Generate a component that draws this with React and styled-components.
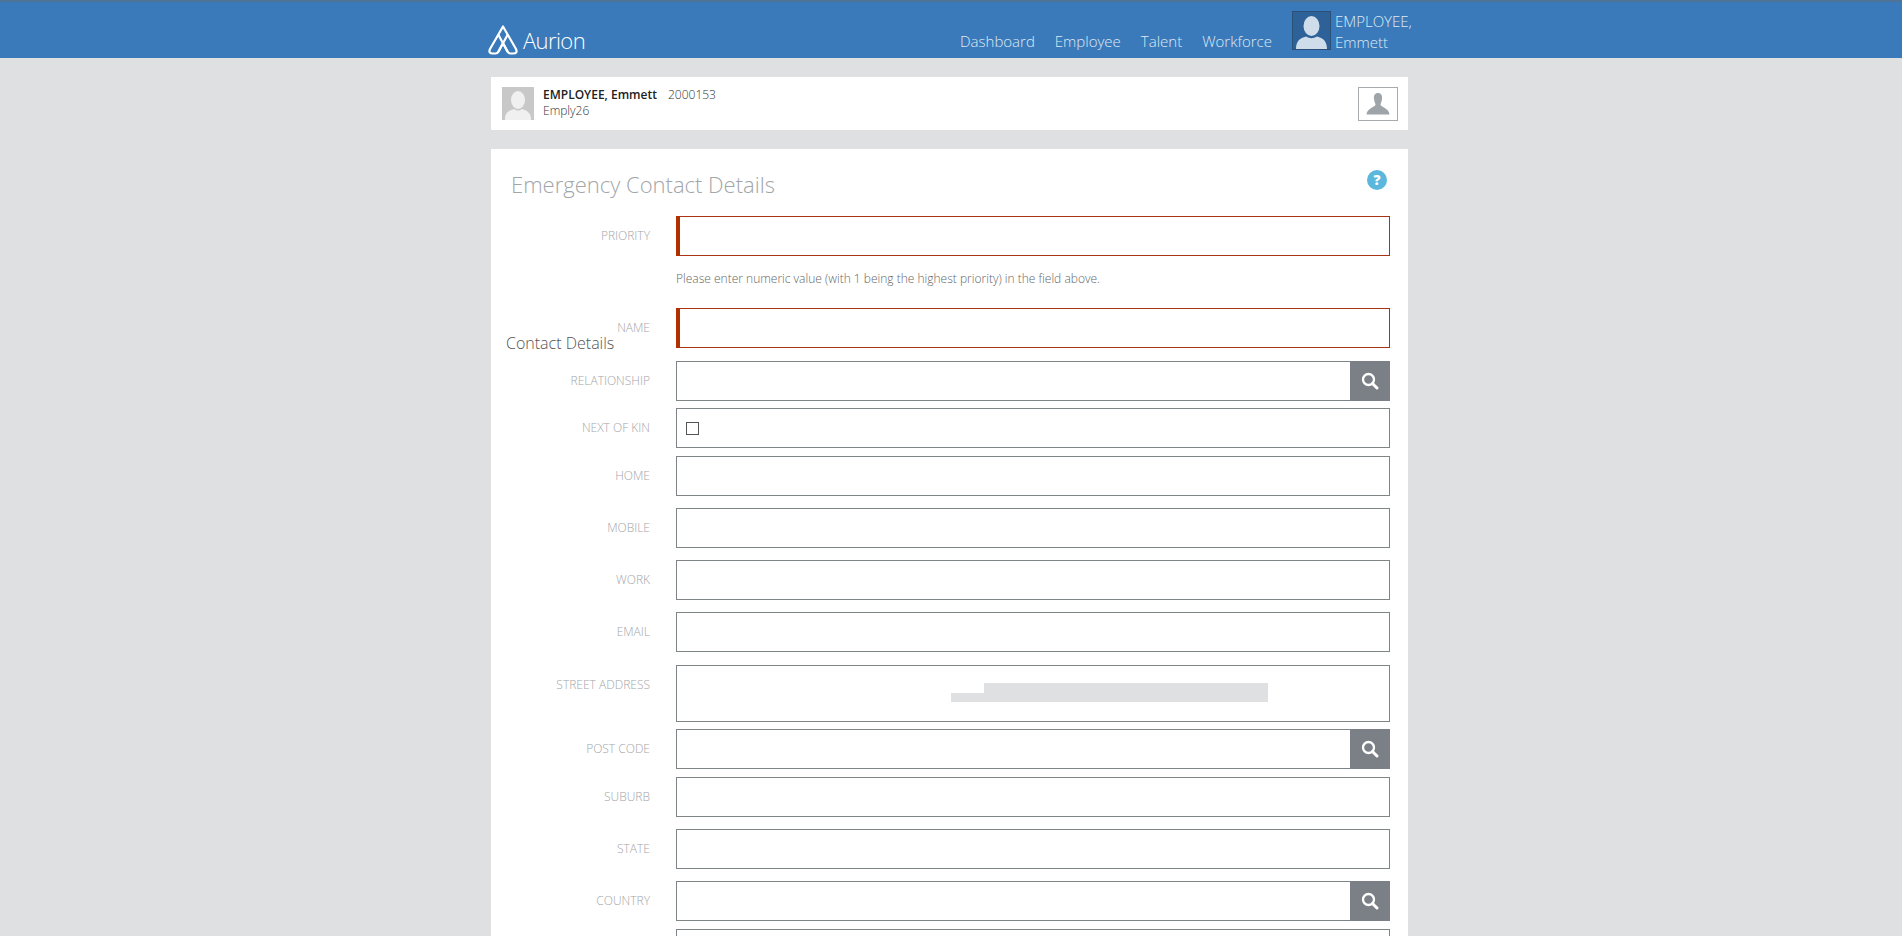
import styled, { createGlobalStyle } from 'styled-components';

const GlobalStyle = createGlobalStyle`
  html, body {
    margin: 0;
    height: 936px;
    overflow: hidden;
    background-color: #dfe0e2;
    font-family: "Open Sans", "Liberation Sans", sans-serif;
  }
`;

const Header = styled.header`
  box-sizing: border-box;
  height: 58px;
  background-color: #3a7aba;
  border-top: 2px solid #4f7396;
  display: flex;
  padding-left: 488px;
`;

const Logo = styled.div`
  display: flex;
  align-items: flex-end;
  width: 472px;
  height: 42px;
  margin-top: 11px;
`;

const LogoText = styled.span`
  color: #fff;
  font-size: 22px;
  font-weight: 300;
  line-height: 30px;
  margin-left: 5px;
  letter-spacing: -0.6px;
`;

const Nav = styled.nav`
  display: flex;
  gap: 20px;
  padding-top: 28px;
`;

const NavLink = styled.a`
  color: #dfe9f4;
  font-size: 15px;
  font-weight: 300;
  line-height: 22px;
`;

const UserBox = styled.div`
  display: flex;
  margin-left: 20px;
  padding-top: 9px;
`;

const HeaderAvatar = styled.div`
  box-sizing: border-box;
  width: 39px;
  height: 39px;
  background-color: #2d6198;
  border: 1px solid #2a4f78;
`;

const UserName = styled.div`
  color: #dfe9f4;
  font-size: 15px;
  font-weight: 300;
  line-height: 21px;
  margin-left: 4px;
  width: 84px;
`;

const Main = styled.main`
  width: 917px;
  margin-left: 491px;
`;

const PersonBar = styled.section`
  box-sizing: border-box;
  height: 53px;
  margin-top: 19px;
  background-color: #fff;
  display: flex;
  padding: 10px 10px 0 11px;
`;

const PersonPhoto = styled.div`
  width: 32px;
  height: 33px;
  background-color: #c8c8c8;
  overflow: hidden;
`;

const PersonText = styled.div`
  margin-left: 9px;
  flex: 1;
  color: #333;
  font-size: 12px;
  line-height: 16px;
`;

const PersonName = styled.b`
  font-weight: 600;
  color: #222;
  margin-right: 11px;
`;

const PersonNumber = styled.span`
  font-weight: 300;
`;

const PersonCode = styled.div`
  font-weight: 300;
`;

const PhotoButton = styled.div`
  box-sizing: border-box;
  width: 40px;
  height: 34px;
  border: 1px solid #a8abad;
  display: flex;
  align-items: center;
  justify-content: center;
`;

const FormCard = styled.section`
  position: relative;
  margin-top: 19px;
  background-color: #fff;
  padding-right: 18px;
  height: 900px;
`;

const TitleRow = styled.div`
  box-sizing: border-box;
  height: 67px;
  display: flex;
  justify-content: space-between;
  padding: 19px 3px 0 20px;
`;

const Title = styled.h1`
  margin: 0;
  color: #a1a6a9;
  font-size: 22px;
  font-weight: 300;
  line-height: 33px;
`;

const Help = styled.div`
  width: 20px;
  height: 20px;
  margin-top: 2px;
  border-radius: 50%;
  background-color: #5bb8dc;
  color: #fff;
  font-size: 14px;
  font-weight: 800;
  line-height: 20px;
  text-align: center;
`;

const SectionName = styled.h2`
  position: absolute;
  left: 15px;
  top: 181px;
  margin: 0;
  color: #555;
  font-size: 16px;
  font-weight: 300;
  line-height: 26px;
`;

const Row = styled.div`
  display: grid;
  grid-template-columns: 159px 714px;
  column-gap: 26px;
  align-items: start;
  margin-top: ${props => props.$gap || 0}px;
`;

const Label = styled.label`
  color: #a3a6a8;
  font-size: 12px;
  font-weight: 300;
  line-height: 40px;
  text-align: right;
`;

const Field = styled.div`
  box-sizing: border-box;
  position: relative;
  display: flex;
  align-items: center;
  height: ${props => props.$height || 40}px;
  border: 1px solid #7f8487;
  background-color: #fff;
`;

const RequiredField = styled(Field)`
  border-color: #a93412;
  border-left: 4px solid #b03000;
`;

const SearchButton = styled.div`
  position: absolute;
  top: -1px;
  right: -1px;
  bottom: -1px;
  width: 40px;
  background-color: #7a8085;
  display: flex;
  align-items: center;
  justify-content: center;
`;

const Checkbox = styled.span`
  box-sizing: border-box;
  width: 13px;
  height: 13px;
  margin-left: 9px;
  border: 1px solid #555;
`;

const Hint = styled.p`
  box-sizing: border-box;
  height: 52px;
  margin: 0 0 0 185px;
  padding-top: 14px;
  color: #666;
  font-size: 12px;
  font-weight: 300;
  line-height: 18px;
`;

const MaskTop = styled.div`
  position: absolute;
  left: 307px;
  top: 17px;
  width: 284px;
  height: 19px;
  background-color: #dfe0e2;
`;

const MaskLeft = styled.div`
  position: absolute;
  left: 274px;
  top: 27px;
  width: 33px;
  height: 9px;
  background-color: #dfe0e2;
`;

const AurionMark = () => (
  <svg width="30" height="30" viewBox="0 0 30 30" fill="none" stroke="#fff" strokeWidth="2.2" strokeLinejoin="round" strokeLinecap="round">
    <path d="M15 1.5 L2 24 Q0 28.5 5 28.5 L7.5 28.5 Q9.5 28.5 10.5 26.5 L15 18 L19.5 26.5 Q20.5 28.5 22.5 28.5 L25 28.5 Q30 28.5 28 24 Z" />
    <path d="M10.5 10 L19.5 26.5 M19.5 10 L10.5 26.5" />
  </svg>
);

const HeaderPerson = () => (
  <svg width="37" height="37" viewBox="0 0 37 37" fill="#cfdcea">
    <ellipse cx="18.5" cy="14" rx="8" ry="10" />
    <path d="M3 37 C3 29 7 26 13 24.5 Q18.5 28 24 24.5 C30 26 34 29 34 37 Z" />
  </svg>
);

const BarPerson = () => (
  <svg width="32" height="33" viewBox="0 0 32 33" fill="#f0f0f0">
    <ellipse cx="16" cy="13" rx="7" ry="9" />
    <path d="M3 33 C3 26 6 24 12 22 Q16 25 20 22 C26 24 29 26 29 33 Z" />
  </svg>
);

const PhotoIcon = () => (
  <svg width="24" height="22" viewBox="0 0 24 22" fill="#9ea4a8">
    <path d="M12 0 C15 0 16.5 2.500 16 6 C15.700 8.500 14.800 10 14.500 11.500 C14.500 14 23 15 23.500 21.500 L0.500 21.500 C1 15 9.500 14 9.500 11.500 C9.200 10 8.300 8.500 8 6 C7.500 2.500 9 0 12 0 Z" />
  </svg>
);

const SearchIcon = () => (
  <svg width="18" height="18" viewBox="0 0 18 18" fill="none" stroke="#fff">
    <circle cx="7.500" cy="7.500" r="5.500" strokeWidth="2.300" />
    <path d="M11.500 11.500 L16 16" strokeWidth="3" strokeLinecap="round" />
  </svg>
);

function App() {
  const lookup = (
    <SearchButton>
      <SearchIcon />
    </SearchButton>
  );

  return (
    <>
      <GlobalStyle />
      <Header>
        <Logo>
          <AurionMark />
          <LogoText>Aurion</LogoText>
        </Logo>
        <Nav>
          <NavLink>Dashboard</NavLink>
          <NavLink>Employee</NavLink>
          <NavLink>Talent</NavLink>
          <NavLink>Workforce</NavLink>
        </Nav>
        <UserBox>
          <HeaderAvatar>
            <HeaderPerson />
          </HeaderAvatar>
          <UserName>EMPLOYEE, Emmett</UserName>
        </UserBox>
      </Header>
      <Main>
        <PersonBar>
          <PersonPhoto>
            <BarPerson />
          </PersonPhoto>
          <PersonText>
            <PersonName>EMPLOYEE, Emmett</PersonName>
            <PersonNumber>2000153</PersonNumber>
            <PersonCode>Emply26</PersonCode>
          </PersonText>
          <PhotoButton>
            <PhotoIcon />
          </PhotoButton>
        </PersonBar>
        <FormCard>
          <TitleRow>
            <Title>Emergency Contact Details</Title>
            <Help>?</Help>
          </TitleRow>
          <SectionName>Contact Details</SectionName>
          <Row>
            <Label>PRIORITY</Label>
            <RequiredField />
          </Row>
          <Hint>Please enter numeric value (with 1 being the highest priority) in the field above.</Hint>
          <Row>
            <Label>NAME</Label>
            <RequiredField />
          </Row>
          <Row $gap={13}>
            <Label>RELATIONSHIP</Label>
            <Field $height={40}>{lookup}</Field>
          </Row>
          <Row $gap={7}>
            <Label>NEXT OF KIN</Label>
            <Field>
              <Checkbox />
            </Field>
          </Row>
          <Row $gap={8}>
            <Label>HOME</Label>
            <Field />
          </Row>
          <Row $gap={12}>
            <Label>MOBILE</Label>
            <Field />
          </Row>
          <Row $gap={12}>
            <Label>WORK</Label>
            <Field />
          </Row>
          <Row $gap={12}>
            <Label>EMAIL</Label>
            <Field />
          </Row>
          <Row $gap={13}>
            <Label>STREET ADDRESS</Label>
            <Field $height={57}>
              <MaskTop />
              <MaskLeft />
            </Field>
          </Row>
          <Row $gap={7}>
            <Label>POST CODE</Label>
            <Field>{lookup}</Field>
          </Row>
          <Row $gap={8}>
            <Label>SUBURB</Label>
            <Field />
          </Row>
          <Row $gap={12}>
            <Label>STATE</Label>
            <Field />
          </Row>
          <Row $gap={12}>
            <Label>COUNTRY</Label>
            <Field>{lookup}</Field>
          </Row>
          <Row $gap={8}>
            <Label />
            <Field />
          </Row>
        </FormCard>
      </Main>
    </>
  );
}

export default App;
